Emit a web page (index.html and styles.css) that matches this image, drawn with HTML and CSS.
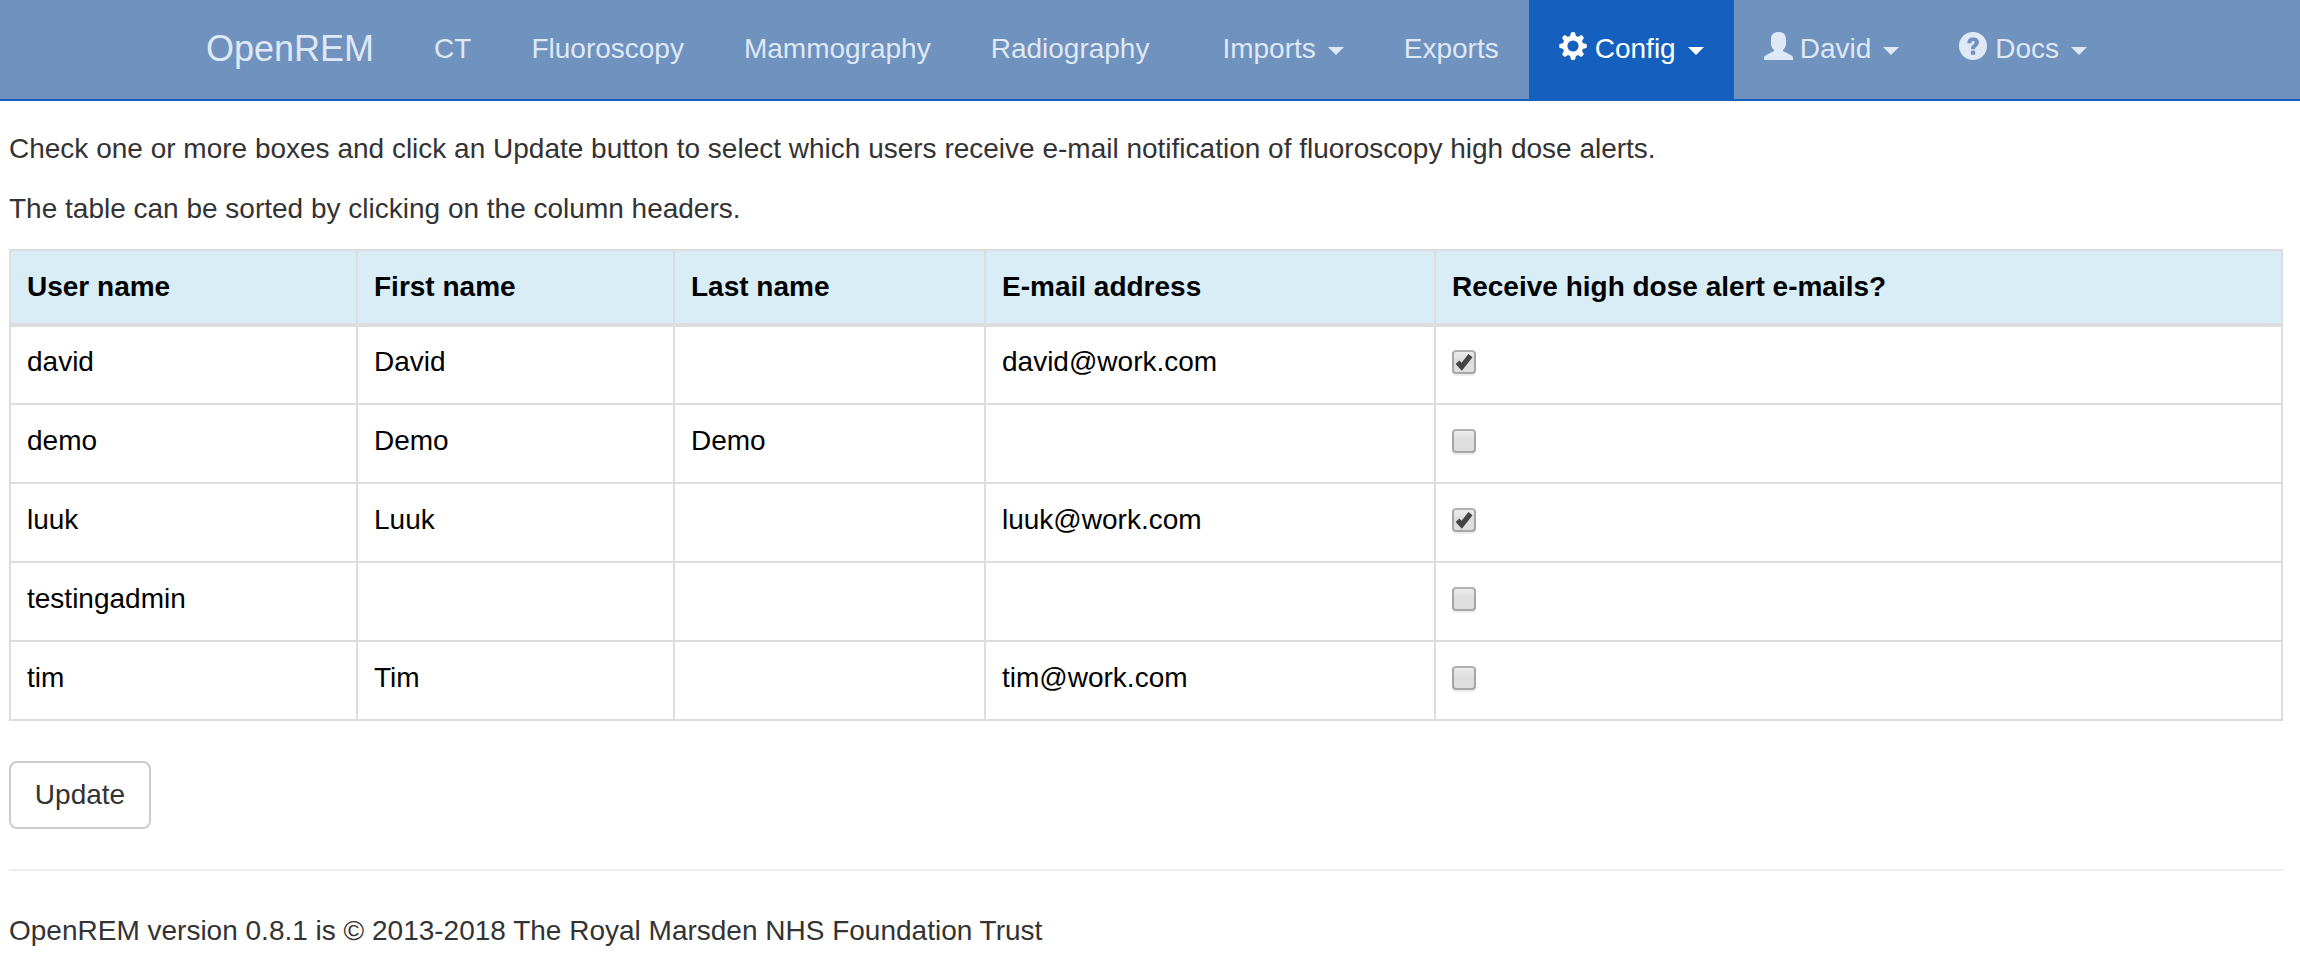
FILE: index.html
```
<!DOCTYPE html>
<html lang="en">
<head>
<meta charset="utf-8">
<title>OpenREM</title>
<link rel="stylesheet" href="styles.css">
</head>
<body>
<nav class="navbar">
  <a class="brand">OpenREM</a>
  <a class="item">CT</a>
  <a class="item">Fluoroscopy</a>
  <a class="item">Mammography</a>
  <a class="item">Radiography</a>
  <a class="item imports">Imports<span class="caret"></span></a>
  <a class="item">Exports</a>
  <a class="item active"><svg class="icon" viewBox="0 0 28 28"><circle cx="14" cy="14" r="8" fill="none" stroke="currentColor" stroke-width="4.8"/><g fill="currentColor"><path id="tooth" d="M10.900 5 12 .6Q14-.4 16 .6L17.100 5Z"/><use href="#tooth" transform="rotate(45 14 14)"/><use href="#tooth" transform="rotate(90 14 14)"/><use href="#tooth" transform="rotate(135 14 14)"/><use href="#tooth" transform="rotate(180 14 14)"/><use href="#tooth" transform="rotate(225 14 14)"/><use href="#tooth" transform="rotate(270 14 14)"/><use href="#tooth" transform="rotate(315 14 14)"/></g></svg><span class="label">Config</span><span class="caret"></span></a>
  <a class="item"><svg class="icon user" viewBox="0 0 29 28"><path fill="currentColor" d="M14.500 0C19 0 22 2.600 22 7v4.500c0 3-1.300 5.200-3 6.300v1.200l7.800 4Q29 24.200 29 25.800V28H0v-2.200Q0 24.200 2.200 23L10 19v-1.200C8.300 16.700 7 14.500 7 11.500V7C7 2.600 10 0 14.500 0Z"/></svg><span class="label">David</span><span class="caret"></span></a>
  <a class="item"><svg class="icon" viewBox="0 0 28 28"><path fill="currentColor" fill-rule="evenodd" d="M14 0a14 14 0 1 1 0 28a14 14 0 0 1 0-28ZM12 18.700v4.100h4.200v-4.100ZM8.300 11.300h4c.1-1.500.5-2.200 1.700-2.200 1 0 1.600.5 1.600 1.400 0 1-.5 1.500-1.600 2.300-1.500 1-2 2-2 4v.4h4c.1-1.400.5-1.800 1.800-2.700 1.500-1.100 2.100-2.400 2.100-4.200 0-3-2.200-4.900-5.700-4.900-3.700 0-5.800 2-5.900 5.900Z"/></svg><span class="label">Docs</span><span class="caret"></span></a>
</nav>
<main class="content">
  <p class="text">Check one or more boxes and click an Update button to select which users receive e-mail notification of fluoroscopy high dose alerts.</p>
  <p class="text">The table can be sorted by clicking on the column headers.</p>
  <div class="table">
    <div class="cell head">User name</div><div class="cell head">First name</div><div class="cell head">Last name</div><div class="cell head">E-mail address</div><div class="cell head">Receive high dose alert e-mails?</div>
    <div class="cell first">david</div><div class="cell first">David</div><div class="cell first"></div><div class="cell first">david@work.com</div><div class="cell first"><span class="check"><svg viewBox="0 0 24 24"><path class="tick" d="M5.500 12.300 9.700 16.800 18.500 5.600"/></svg></span></div>
    <div class="cell">demo</div><div class="cell">Demo</div><div class="cell">Demo</div><div class="cell"></div><div class="cell"><span class="check"></span></div>
    <div class="cell">luuk</div><div class="cell">Luuk</div><div class="cell"></div><div class="cell">luuk@work.com</div><div class="cell"><span class="check"><svg viewBox="0 0 24 24"><path class="tick" d="M5.500 12.300 9.700 16.800 18.500 5.600"/></svg></span></div>
    <div class="cell">testingadmin</div><div class="cell"></div><div class="cell"></div><div class="cell"></div><div class="cell"><span class="check"></span></div>
    <div class="cell">tim</div><div class="cell">Tim</div><div class="cell"></div><div class="cell">tim@work.com</div><div class="cell"><span class="check"></span></div>
  </div>
  <button class="button">Update</button>
  <hr class="rule">
  <p class="text">OpenREM version 0.8.1 is © 2013-2018 The Royal Marsden NHS Foundation Trust</p>
</main>
</body>
</html>
```
FILE: styles.css
```
* { box-sizing: border-box; }
body {
  margin: 0;
  background: #fff;
  color: #333;
  font: 28px/40px "Liberation Sans", Arial, sans-serif;
}
.navbar {
  display: flex;
  height: 101px;
  padding-left: 176px;
  background: linear-gradient(#7092bf 99px, #155fbe 99px);
  color: #dfe8f5;
}
.brand { padding: 29px 30px 0; font-size: 36px; }
.item {
  display: flex;
  padding: 29px 30px 0;
  white-space: nowrap;
}
.imports { margin-left: 13px; }
.active { background: #155fbe; color: #fff; }
.icon { width: 28px; height: 28px; margin-top: 3px; flex: none; }
.icon.user { width: 29px; }
.label { margin-left: 8px; }
.user + .label { margin-left: 7px; }
.caret {
  height: 8px;
  margin: 18px 0 0 12px;
  border: 8px solid transparent;
  border-top-color: currentColor;
  border-bottom: 0;
}
.content { padding: 28px 17px 0 9px; }
.text { margin: 0 0 20px; }
.table {
  display: grid;
  grid-template-columns: 347px 317px 311px 450px 847px;
  grid-template-rows: 76px 78px repeat(4, 79px);
  width: 2274px;
  border: 2px solid #ddd;
  border-width: 2px 0 0 2px;
  color: #000;
}
.cell {
  padding: 16px 16px 0;
  border: 2px solid #ddd;
  border-width: 0 2px 2px 0;
}
.first { padding-top: 15px; }
.head {
  border-bottom-width: 4px;
  background: #d9edf7;
  font-weight: bold;
}
.check {
  display: block;
  width: 24px;
  height: 24px;
  margin-top: 8px;
  border: 2px solid #a6a6a6;
  border-top-color: #b1b1b1;
  border-radius: 4px;
  background: linear-gradient(#ededed, #dedede 40%, #dedede);
  box-shadow: 0 2px 1px #ebebeb;
}
.check svg { display: block; width: 24px; height: 24px; margin: -2px; }
.tick { fill: none; stroke: #444; stroke-width: 5.2; }
.button {
  display: block;
  width: 142px;
  height: 68px;
  margin: 40px 0;
  padding: 0;
  border: 2px solid #ccc;
  border-radius: 8px;
  background: #fff;
  color: #333;
  font: inherit;
}
.rule { height: 2px; margin: 0 0 40px; border: 0; background: #eee; }
```
